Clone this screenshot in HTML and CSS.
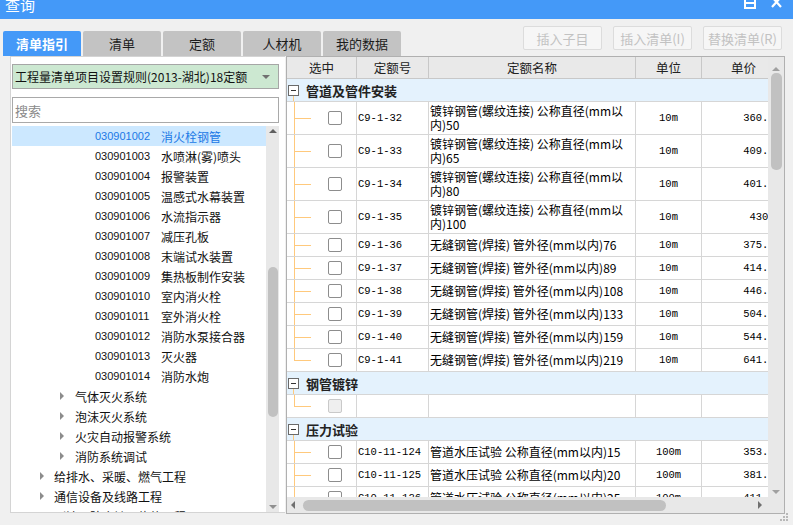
FILE: index.html
```html
<!DOCTYPE html>
<html lang="zh-CN">
<head>
<meta charset="utf-8">
<title>查询</title>
<link rel="stylesheet" href="styles.css">
</head>
<body>
<div class="window">
  <div class="titlebar">
    <span class="title">查询</span>
    <div class="win-btns">
      <svg class="ico-restore" width="12" height="10" viewBox="0 0 12 10"><rect x="1" y="-3" width="10" height="11" fill="none" stroke="#fff" stroke-width="2"/><line x1="1" y1="3" x2="11" y2="3" stroke="#fff" stroke-width="2"/></svg>
      <svg class="ico-close" width="11" height="10" viewBox="0 0 11 10"><path d="M1 -3 L10 7 M10 -3 L1 7" stroke="#fff" stroke-width="2.2" fill="none"/></svg>
    </div>
  </div>

  <div class="toolbar">
    <div class="tabs">
      <div class="tab active">清单指引</div>
      <div class="tab">清单</div>
      <div class="tab">定额</div>
      <div class="tab">人材机</div>
      <div class="tab">我的数据</div>
    </div>
    <div class="actions">
      <button class="btn" disabled>插入子目</button>
      <button class="btn" disabled>插入清单(I)</button>
      <button class="btn" disabled>替换清单(R)</button>
    </div>
  </div>

  <div class="main">
    <div class="left">
      <div class="select"><span>工程量清单项目设置规则(2013-湖北)18定额</span><span class="caret"></span></div>
      <div class="search">搜索</div>
      <div class="tree">
        <div class="tree-body">
          <div class="trow leaf selected"><span class="code">030901002</span><span>消火栓钢管</span></div>
          <div class="trow leaf"><span class="code">030901003</span><span>水喷淋(雾)喷头</span></div>
          <div class="trow leaf"><span class="code">030901004</span><span>报警装置</span></div>
          <div class="trow leaf"><span class="code">030901005</span><span>温感式水幕装置</span></div>
          <div class="trow leaf"><span class="code">030901006</span><span>水流指示器</span></div>
          <div class="trow leaf"><span class="code">030901007</span><span>减压孔板</span></div>
          <div class="trow leaf"><span class="code">030901008</span><span>末端试水装置</span></div>
          <div class="trow leaf"><span class="code">030901009</span><span>集热板制作安装</span></div>
          <div class="trow leaf"><span class="code">030901010</span><span>室内消火栓</span></div>
          <div class="trow leaf"><span class="code">030901011</span><span>室外消火栓</span></div>
          <div class="trow leaf"><span class="code">030901012</span><span>消防水泵接合器</span></div>
          <div class="trow leaf"><span class="code">030901013</span><span>灭火器</span></div>
          <div class="trow leaf"><span class="code">030901014</span><span>消防水炮</span></div>
          <div class="trow lvl2"><span class="tarrow"></span><span>气体灭火系统</span></div>
          <div class="trow lvl2"><span class="tarrow"></span><span>泡沫灭火系统</span></div>
          <div class="trow lvl2"><span class="tarrow"></span><span>火灾自动报警系统</span></div>
          <div class="trow lvl2"><span class="tarrow"></span><span>消防系统调试</span></div>
          <div class="trow lvl1"><span class="tarrow"></span><span>给排水、采暖、燃气工程</span></div>
          <div class="trow lvl1"><span class="tarrow"></span><span>通信设备及线路工程</span></div>
          <div class="trow lvl1"><span class="tarrow"></span><span>刷油、防腐蚀、绝热工程</span></div>
        </div>
        <div class="vscroll tree-scroll">
          <span class="arr-up"></span>
          <span class="thumb"></span>
          <span class="fill"></span>
          <span class="arr-down"></span>
        </div>
      </div>
    </div>

    <div class="right">
      <div class="grid-area">
        <div class="grid-view">
          <div class="row head">
            <div class="cell">选中</div>
            <div class="cell">定额号</div>
            <div class="cell">定额名称</div>
            <div class="cell">单位</div>
            <div class="cell">单价</div>
          </div>

          <div class="group"><span class="toggle"></span><span class="gname">管道及管件安装</span></div>
          <div class="row tall"><div class="cell c-sel"><span class="branch"></span><span class="check"></span></div><div class="cell c-code">C9-1-32</div><div class="cell c-name">镀锌钢管(螺纹连接) 公称直径(mm以内)50</div><div class="cell c-unit">10m</div><div class="cell c-price">360.22</div></div>
          <div class="row tall"><div class="cell c-sel"><span class="branch"></span><span class="check"></span></div><div class="cell c-code">C9-1-33</div><div class="cell c-name">镀锌钢管(螺纹连接) 公称直径(mm以内)65</div><div class="cell c-unit">10m</div><div class="cell c-price">409.46</div></div>
          <div class="row tall"><div class="cell c-sel"><span class="branch"></span><span class="check"></span></div><div class="cell c-code">C9-1-34</div><div class="cell c-name">镀锌钢管(螺纹连接) 公称直径(mm以内)80</div><div class="cell c-unit">10m</div><div class="cell c-price">401.23</div></div>
          <div class="row tall"><div class="cell c-sel"><span class="branch"></span><span class="check"></span></div><div class="cell c-code">C9-1-35</div><div class="cell c-name">镀锌钢管(螺纹连接) 公称直径(mm以内)100</div><div class="cell c-unit">10m</div><div class="cell c-price">430.0</div></div>
          <div class="row"><div class="cell c-sel"><span class="branch"></span><span class="check"></span></div><div class="cell c-code">C9-1-36</div><div class="cell c-name">无缝钢管(焊接) 管外径(mm以内)76</div><div class="cell c-unit">10m</div><div class="cell c-price">375.08</div></div>
          <div class="row"><div class="cell c-sel"><span class="branch"></span><span class="check"></span></div><div class="cell c-code">C9-1-37</div><div class="cell c-name">无缝钢管(焊接) 管外径(mm以内)89</div><div class="cell c-unit">10m</div><div class="cell c-price">414.45</div></div>
          <div class="row"><div class="cell c-sel"><span class="branch"></span><span class="check"></span></div><div class="cell c-code">C9-1-38</div><div class="cell c-name">无缝钢管(焊接) 管外径(mm以内)108</div><div class="cell c-unit">10m</div><div class="cell c-price">446.32</div></div>
          <div class="row"><div class="cell c-sel"><span class="branch"></span><span class="check"></span></div><div class="cell c-code">C9-1-39</div><div class="cell c-name">无缝钢管(焊接) 管外径(mm以内)133</div><div class="cell c-unit">10m</div><div class="cell c-price">504.47</div></div>
          <div class="row"><div class="cell c-sel"><span class="branch"></span><span class="check"></span></div><div class="cell c-code">C9-1-40</div><div class="cell c-name">无缝钢管(焊接) 管外径(mm以内)159</div><div class="cell c-unit">10m</div><div class="cell c-price">544.23</div></div>
          <div class="row"><div class="cell c-sel"><span class="branch last"></span><span class="check"></span></div><div class="cell c-code">C9-1-41</div><div class="cell c-name">无缝钢管(焊接) 管外径(mm以内)219</div><div class="cell c-unit">10m</div><div class="cell c-price">641.38</div></div>

          <div class="group"><span class="toggle"></span><span class="gname">钢管镀锌</span></div>
          <div class="row"><div class="cell c-sel"><span class="branch last"></span><span class="check off"></span></div><div class="cell c-code"></div><div class="cell c-name"></div><div class="cell c-unit"></div><div class="cell c-price"></div></div>

          <div class="group"><span class="toggle"></span><span class="gname">压力试验</span></div>
          <div class="row"><div class="cell c-sel"><span class="branch"></span><span class="check"></span></div><div class="cell c-code">C10-11-124</div><div class="cell c-name">管道水压试验 公称直径(mm以内)15</div><div class="cell c-unit">100m</div><div class="cell c-price">353.41</div></div>
          <div class="row"><div class="cell c-sel"><span class="branch"></span><span class="check"></span></div><div class="cell c-code">C10-11-125</div><div class="cell c-name">管道水压试验 公称直径(mm以内)20</div><div class="cell c-unit">100m</div><div class="cell c-price">381.27</div></div>
          <div class="row"><div class="cell c-sel"><span class="branch"></span><span class="check"></span></div><div class="cell c-code">C10-11-126</div><div class="cell c-name">管道水压试验 公称直径(mm以内)25</div><div class="cell c-unit">100m</div><div class="cell c-price">411.15</div></div>
        </div>
        <div class="vscroll grid-scroll">
          <span class="arr-up"></span>
          <span class="thumb"></span>
          <span class="fill"></span>
          <span class="arr-down"></span>
        </div>
      </div>
      <div class="hbar">
        <div class="hscroll">
          <span class="arr-left"></span>
          <span class="hthumb"></span>
          <span class="fill"></span>
          <span class="arr-right"></span>
        </div>
        <div class="corner"></div>
      </div>
    </div>
  </div>
  <div class="grip"><span></span><span></span><span></span><span></span><span></span><span></span></div>
</div>
</body>
</html>
```

FILE: styles.css
```css
* { box-sizing: border-box; }

html, body {
  margin: 0;
  padding: 0;
}

body {
  width: 793px;
  height: 525px;
  overflow: hidden;
  background: #f0f0f0;
  font-family: "Noto Sans CJK SC", "Liberation Sans", sans-serif;
  font-size: 12px;
  color: #000;
}

.window {
  width: 793px;
  height: 525px;
  display: flex;
  flex-direction: column;
  position: relative;
}

/* title bar */
.titlebar {
  height: 19px;
  flex: none;
  background: #4499f8;
  color: #fff;
  display: flex;
  justify-content: space-between;
  align-items: flex-start;
  overflow: hidden;
}
.title {
  font-size: 15px;
  line-height: 10px;
  padding-left: 5px;
}
.win-btns {
  display: flex;
  gap: 15px;
  padding-right: 11px;
}
.ico-restore, .ico-close { display: block; }

/* toolbar */
.toolbar {
  height: 37px;
  flex: none;
  display: flex;
  justify-content: space-between;
}
.tabs {
  display: flex;
  gap: 2px;
  padding-left: 3px;
  align-self: flex-end;
}
.tab {
  width: 78px;
  height: 25px;
  display: flex;
  align-items: center;
  justify-content: center;
  background: #c3c3c3;
  color: #1c1c1c;
  font-size: 13px;
  border-radius: 2px 2px 0 0;
}
.tab.active {
  background: #4499f8;
  color: #fff;
  font-weight: bold;
  font-size: 13px;
}
.actions {
  display: flex;
  gap: 11px;
  padding: 7px 11px 0 0;
  align-self: flex-start;
}
.btn {
  width: 79px;
  height: 24px;
  padding: 0;
  border: 1px solid #dcdcdc;
  border-radius: 2px;
  background: #f6f6f6;
  color: #c2c2c2;
  font-family: "Noto Sans CJK SC", "Liberation Sans", sans-serif;
  font-size: 13px;
}

/* main area */
.main {
  flex: 1;
  display: flex;
  padding-left: 10px;
  align-items: flex-start;
}

.left {
  width: 275px;
  height: 457px;
  background: #fff;
  border: 1px solid #d4d4d4;
  border-right: none;
  padding: 7px 6px 0 1px;
  display: flex;
  flex-direction: column;
}
.select {
  height: 25px;
  flex: none;
  background: #cce8d1;
  border: 1px solid #a6a6a6;
  display: flex;
  align-items: center;
  justify-content: space-between;
  padding: 0 8px 0 2px;
  font-size: 12px;
  color: #111;
  white-space: nowrap;
  overflow: hidden;
}
.caret {
  flex: none;
  width: 0;
  height: 0;
  border-left: 4px solid transparent;
  border-right: 4px solid transparent;
  border-top: 4px solid #707070;
}
.search {
  height: 26px;
  flex: none;
  margin-top: 8px;
  border: 1px solid #a9a9a9;
  background: #fff;
  display: flex;
  align-items: center;
  padding-left: 2px;
  font-size: 13px;
  color: #8a8a8a;
}
.tree {
  flex: 1;
  margin-top: 3px;
  display: flex;
  overflow: hidden;
}
.tree-body {
  flex: 1;
  overflow: hidden;
}
.trow {
  height: 20px;
  display: flex;
  align-items: center;
  white-space: nowrap;
  color: #111;
  font-size: 12px;
}
.trow.leaf { padding-left: 83px; }
.trow.lvl2 { padding-left: 48px; }
.trow.lvl1 { padding-left: 28px; }
.trow .code {
  width: 66px;
  font-family: "Liberation Sans", sans-serif;
  font-size: 11px;
}
.trow.selected {
  background: #cce8ff;
  color: #1a78e6;
}
.tarrow {
  width: 0;
  height: 0;
  border-top: 4px solid transparent;
  border-bottom: 4px solid transparent;
  border-left: 4px solid #8c8c8c;
  margin-right: 11px;
}
.trow.lvl1 .tarrow { margin-right: 10px; }

/* scrollbars */
.vscroll {
  flex: none;
  display: flex;
  flex-direction: column;
  align-items: center;
  background: #e8e8e8;
}
.vscroll .fill, .hscroll .fill { flex: 1; }
.arr-up {
  width: 0; height: 0;
  border-left: 4px solid transparent;
  border-right: 4px solid transparent;
  border-bottom: 4px solid #606060;
}
.arr-down {
  width: 0; height: 0;
  border-left: 4px solid transparent;
  border-right: 4px solid transparent;
  border-top: 4px solid #909090;
}
.thumb {
  width: 10px;
  border-radius: 5px;
  background: #c1c1c1;
}
.tree-scroll { width: 13px; }
.tree-scroll .arr-up { margin-top: 3px; }
.tree-scroll .thumb { margin-top: 134px; height: 150px; }
.tree-scroll .arr-down { margin-bottom: 3px; }

.right {
  width: 499px;
  height: 458px;
  margin-left: 1px;
  border: 1px solid #b0b0b0;
  background: #fff;
  display: flex;
  flex-direction: column;
}
.grid-area {
  height: 440px;
  flex: none;
  display: flex;
}
.grid-view {
  width: 481px;
  overflow: hidden;
}
.grid-scroll { width: 16px; }
.grid-scroll .arr-up { margin-top: 10px; border-bottom-color: #a0a0a0; }
.grid-scroll .thumb { margin-top: 2px; height: 97px; width: 11px; }
.grid-scroll .arr-down { margin-bottom: 3px; border-top-color: #a0a0a0; }

.row {
  width: 499px;
  height: 23px;
  display: grid;
  grid-template-columns: 70px 72px 207px 66px 84px;
  border-bottom: 1px solid #d6d6d6;
}
.row.tall { height: 33px; }
.cell {
  border-right: 1px solid #d6d6d6;
  display: flex;
  align-items: center;
  overflow: hidden;
  white-space: nowrap;
}
.row.head {
  height: 22px;
  background: #e9e9e9;
  border-bottom-color: #c8c8c8;
}
.row.head .cell {
  justify-content: center;
  border-right-color: #c8c8c8;
  color: #222;
  font-size: 12.5px;
}
.c-code {
  padding-left: 1px;
  font-family: "Liberation Mono", monospace;
  font-size: 10.5px;
}
.c-name {
  padding: 0 2px 0 1px;
  white-space: normal;
  line-height: 14px;
}
.c-unit {
  justify-content: center;
  font-family: "Liberation Mono", monospace;
  font-size: 10.5px;
}
.c-price {
  justify-content: flex-end;
  padding-right: 4px;
  font-family: "Liberation Mono", monospace;
  font-size: 10.5px;
}
.c-sel { align-items: stretch; }
.branch {
  width: 17px;
  margin-left: 7px;
  background:
    linear-gradient(#ffc97c, #ffc97c) left center / 100% 1px no-repeat,
    linear-gradient(#ffc97c, #ffc97c) left top / 1px 100% no-repeat;
}
.branch.last {
  background:
    linear-gradient(#ffc97c, #ffc97c) left center / 100% 1px no-repeat,
    linear-gradient(#ffc97c, #ffc97c) left top / 1px 50% no-repeat;
}
.check {
  width: 14px;
  height: 14px;
  align-self: center;
  margin-left: 17px;
  border: 1px solid #8d8d8d;
  border-radius: 2px;
  background: #fff;
}
.check.off {
  border-color: #c9c9c9;
  background: #efefef;
}

.group {
  width: 499px;
  height: 23px;
  display: flex;
  align-items: center;
  background:
    linear-gradient(#ffc97c, #ffc97c) 6px 17px / 1px 6px no-repeat,
    #e4f2fd;
  border-bottom: 1px solid #d6d6d6;
}
.toggle {
  width: 11px;
  height: 11px;
  margin-left: 1px;
  border: 1px solid #6a6a6a;
  background: linear-gradient(#333, #333) center / 5px 1px no-repeat, #fff;
}
.gname {
  margin-left: 7px;
  font-weight: bold;
  font-size: 13px;
  color: #222;
}

.hbar {
  height: 16px;
  flex: none;
  display: flex;
}
.hscroll {
  width: 481px;
  background: #e8e8e8;
  display: flex;
  align-items: center;
}
.arr-left {
  width: 0; height: 0;
  margin-left: 4px;
  border-top: 4px solid transparent;
  border-bottom: 4px solid transparent;
  border-right: 4px solid #707070;
}
.arr-right {
  width: 0; height: 0;
  margin-right: 6px;
  border-top: 4px solid transparent;
  border-bottom: 4px solid transparent;
  border-left: 4px solid #707070;
}
.hthumb {
  margin-left: 8px;
  width: 363px;
  height: 11px;
  border-radius: 6px;
  background: #c1c1c1;
}
.corner {
  width: 16px;
  background: #e8e8e8;
}

.grip {
  position: absolute;
  right: 5px;
  bottom: 4px;
  width: 8px;
  height: 8px;
  display: grid;
  grid-template-columns: repeat(3, 2px);
  grid-template-rows: repeat(3, 2px);
  gap: 1px;
}
.grip span { background: #b8b8b8; }
.grip span:nth-child(1) { grid-column: 3; grid-row: 1; }
.grip span:nth-child(2) { grid-column: 2; grid-row: 2; }
.grip span:nth-child(3) { grid-column: 3; grid-row: 2; }
.grip span:nth-child(4) { grid-column: 1; grid-row: 3; }
.grip span:nth-child(5) { grid-column: 2; grid-row: 3; }
.grip span:nth-child(6) { grid-column: 3; grid-row: 3; }
```
